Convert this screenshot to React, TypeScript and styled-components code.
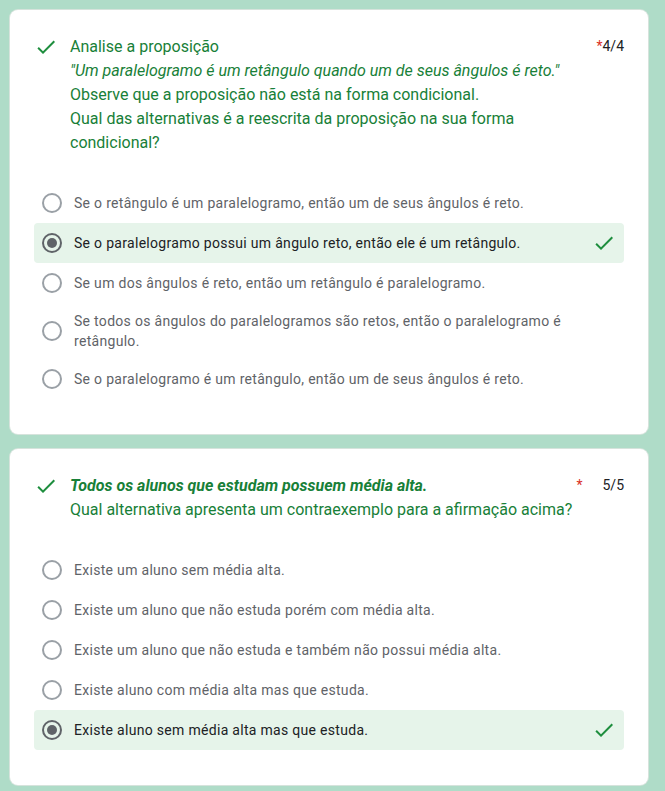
import React from "react";
import styled, { createGlobalStyle } from "styled-components";

const Global = createGlobalStyle`
  html, body { margin: 0; padding: 0; }
  body {
    background: #afdcc8;
    font-family: Roboto, "Noto Sans", Arial, sans-serif;
    -webkit-font-smoothing: antialiased;
  }
`;

const Page = styled.div`
  display: flex;
  flex-direction: column;
  gap: 15px;
  padding: 10px 17px 10px 10px;
`;

const Card = styled.section`
  background: #fff;
  border-radius: 8px;
  box-shadow: 0 0 0 1px #d6e3dc;
  padding: 25px 24px 35px 24px;
  display: flex;
  flex-direction: column;
  gap: 28px;
`;

const Header = styled.div`
  display: flex;
  align-items: flex-start;
`;

const IconBox = styled.span<{ $mr?: number }>`
  width: 24px;
  height: 24px;
  flex: none;
  display: flex;
  margin-right: ${(p) => p.$mr ?? 0}px;
  color: #1e8e3e;
`;

const Title = styled.div`
  flex: 1;
  min-width: 0;
  font-size: 16px;
  line-height: 24px;
  color: #188038;
`;

const Line = styled.div<{ $italic?: boolean; $bold?: boolean }>`
  font-style: ${(p) => (p.$italic ? "italic" : "normal")};
  font-weight: ${(p) => (p.$bold ? 700 : 400)};
`;

const Points = styled.div<{ $gap: number }>`
  display: flex;
  align-items: flex-start;
  gap: ${(p) => p.$gap}px;
  font-size: 14px;
  line-height: 24px;
  color: #202124;
  flex: none;
  margin-top: -1px;
`;

const Star = styled.span`
  color: #d93025;
  font-size: 14px;
`;

const Options = styled.div`
  display: flex;
  flex-direction: column;
`;

const Row = styled.div<{ $selected?: boolean }>`
  display: flex;
  align-items: center;
  gap: 12px;
  min-height: 40px;
  box-sizing: border-box;
  padding: 8px;
  border-radius: 4px;
  background: ${(p) => (p.$selected ? "#e6f4ea" : "transparent")};
`;

const Radio = styled.span<{ $checked?: boolean }>`
  width: 20px;
  height: 20px;
  box-sizing: border-box;
  border-radius: 50%;
  border: 2px solid ${(p) => (p.$checked ? "#5f6368" : "#9aa0a6")};
  flex: none;
  display: flex;
  align-items: center;
  justify-content: center;
  &::after {
    content: "";
    width: 10px;
    height: 10px;
    border-radius: 50%;
    background: #5f6368;
    display: ${(p) => (p.$checked ? "block" : "none")};
  }
`;

const OptText = styled.span<{ $selected?: boolean }>`
  flex: 1;
  font-size: 14px;
  line-height: 20px;
  color: ${(p) => (p.$selected ? "#202124" : "#5f6368")};
  letter-spacing: 0.3px;
  padding-right: 28px;
`;

const Check = () => (
  <svg width="24" height="24" viewBox="0 0 24 24" fill="currentColor">
    <path d="M9 16.17L4.83 12l-1.42 1.41L9 19 21 7l-1.41-1.41z" />
  </svg>
);

type Q = {
  lines: { text: string; italic?: boolean; bold?: boolean }[];
  points: string;
  starGap: number;
  options: string[];
  selected: number;
};

const questions: Q[] = [
  {
    lines: [
      { text: "Analise a proposição" },
      { text: "\"Um paralelogramo é um retângulo quando um de seus ângulos é reto.\"", italic: true },
      { text: "Observe que a proposição não está na forma condicional." },
      { text: "Qual das alternativas é a reescrita da proposição na sua forma condicional?" },
    ],
    points: "4/4",
    starGap: 0,
    options: [
      "Se o retângulo é um paralelogramo, então um de seus ângulos é reto.",
      "Se o paralelogramo possui um ângulo reto, então ele é um retângulo.",
      "Se um dos ângulos é reto, então um retângulo é paralelogramo.",
      "Se todos os ângulos do paralelogramos são retos, então o paralelogramo é retângulo.",
      "Se o paralelogramo é um retângulo, então um de seus ângulos é reto.",
    ],
    selected: 1,
  },
  {
    lines: [
      { text: "Todos os alunos que estudam possuem média alta.", italic: true, bold: true },
      { text: "Qual alternativa apresenta um contraexemplo para a afirmação acima?" },
    ],
    points: "5/5",
    starGap: 20,
    options: [
      "Existe um aluno sem média alta.",
      "Existe um aluno que não estuda porém com média alta.",
      "Existe um aluno que não estuda e também não possui média alta.",
      "Existe aluno com média alta mas que estuda.",
      "Existe aluno sem média alta mas que estuda.",
    ],
    selected: 4,
  },
];

export default function App() {
  return (
    <>
      <Global />
      <Page>
        {questions.map((q, qi) => (
          <Card key={qi}>
            <Header>
              <IconBox $mr={12}>
                <Check />
              </IconBox>
              <Title>
                {q.lines.map((l, i) => (
                  <Line key={i} $italic={l.italic} $bold={l.bold}>
                    {l.text}
                  </Line>
                ))}
              </Title>
              <Points $gap={q.starGap}>
                <Star>*</Star>
                <span>{q.points}</span>
              </Points>
            </Header>
            <Options>
              {q.options.map((o, i) => {
                const sel = i === q.selected;
                return (
                  <Row key={i} $selected={sel}>
                    <Radio $checked={sel} />
                    <OptText $selected={sel}>{o}</OptText>
                    {sel && (
                      <IconBox>
                        <Check />
                      </IconBox>
                    )}
                  </Row>
                );
              })}
            </Options>
          </Card>
        ))}
      </Page>
    </>
  );
}
